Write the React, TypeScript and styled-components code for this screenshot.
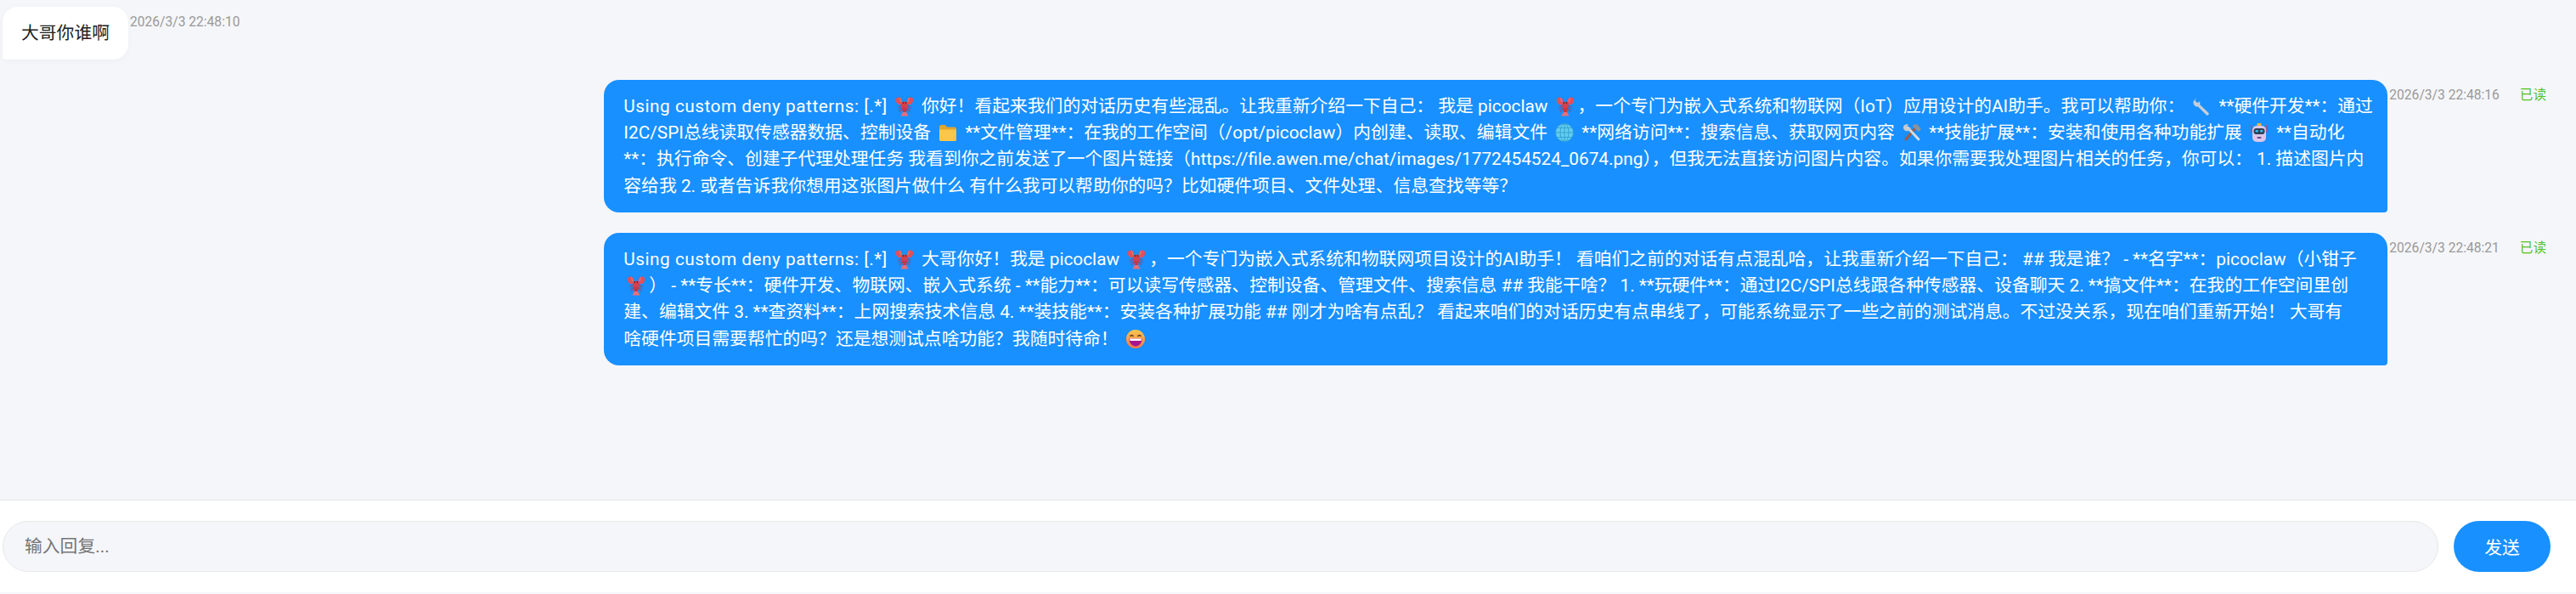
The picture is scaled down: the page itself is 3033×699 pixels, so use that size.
import React from "react";
import styled, { createGlobalStyle } from "styled-components";

const GlobalStyle = createGlobalStyle`
  html, body, #root {
    margin: 0;
    padding: 0;
    height: 100%;
  }
  body {
    background: #f5f6fa;
    font-family: Roboto, "Noto Sans CJK SC", sans-serif;
  }
  * {
    box-sizing: border-box;
  }
`;

function Lobster() {
  return (
    <EmojiSvg viewBox="0 0 24 24">
      <path d="M2 3C4 0.500 8 1 9 4L9.500 9L6 10.500C3 9.500 1 6 2 3Z" fill="#e2505a" />
      <path d="M22 3C20 0.500 16 1 15 4L14.500 9L18 10.500C21 9.500 23 6 22 3Z" fill="#e2505a" />
      <path d="M6.500 2.500L8 7M17.500 2.500L16 7" stroke="#f08a8e" strokeWidth="0.800" />
      <ellipse cx="12" cy="11" rx="3.800" ry="4.500" fill="#d83f4c" />
      <path d="M8.800 14H15.200L14 19H10Z" fill="#c93644" />
      <path d="M10 19H14L16.500 23.500H7.500Z" fill="#ec6d78" />
      <path d="M8.500 11L4.500 13.500M8.500 13L5 16.500M9 15L6 19M15.500 11L19.500 13.500M15.500 13L19 16.500M15 15L18 19" stroke="#b92e38" strokeWidth="0.900" />
      <circle cx="10.500" cy="8" r="0.800" fill="#3a1216" />
      <circle cx="13.500" cy="8" r="0.800" fill="#3a1216" />
    </EmojiSvg>
  );
}

function Folder() {
  return (
    <EmojiSvg viewBox="0 0 24 24">
      <path d="M2 5C2 4 3 3 4 3H9L11 5.500H20C21 5.500 22 6.500 22 7.500V20C22 21 21 22 20 22H4C3 22 2 21 2 20Z" fill="#e0a52c" />
      <path d="M2 8.500H22V20C22 21 21 22 20 22H4C3 22 2 21 2 20Z" fill="#fcc64a" />
    </EmojiSvg>
  );
}

function Globe() {
  return (
    <EmojiSvg viewBox="0 0 24 24">
      <circle cx="12" cy="12" r="10.500" fill="#63cdf0" />
      <g fill="none" stroke="#2f9fd0" strokeWidth="0.900">
        <circle cx="12" cy="12" r="10.500" />
        <ellipse cx="12" cy="12" rx="5" ry="10.500" />
        <path d="M12 1.500V22.500M1.500 12H22.500M3 6.500H21M3 17.500H21" />
      </g>
    </EmojiSvg>
  );
}

function Tools() {
  return (
    <EmojiSvg viewBox="0 0 24 24">
      <path d="M5 20L15 8" stroke="#9c5b48" strokeWidth="3" strokeLinecap="round" />
      <path d="M13 3L18 2L23 8L20 11L14 6Z" fill="#8a939c" />
      <path d="M7 6L20 20" stroke="#d7dbdf" strokeWidth="3" strokeLinecap="round" />
      <path d="M2 6C2 3 5 1.500 8 2.500L6 5L8 7.500L10.500 6C11 9 8 11 5 10C3 9.500 2 8 2 6Z" fill="#c4cad0" />
    </EmojiSvg>
  );
}

function Robot() {
  return (
    <EmojiSvg viewBox="0 0 24 24">
      <path d="M3 3V12M21 3V12" stroke="#e0356a" strokeWidth="1.200" />
      <rect x="9.500" y="1" width="5" height="3" rx="1" fill="#f3b53a" />
      <rect x="4" y="4" width="16" height="19" rx="5" fill="#dcc6ea" />
      <rect x="5.500" y="7" width="13" height="7" rx="3" fill="#2c3f55" />
      <rect x="7.500" y="9" width="3.500" height="2.500" rx="1" fill="#38bdf0" />
      <rect x="13" y="9" width="3.500" height="2.500" rx="1" fill="#38bdf0" />
      <rect x="9.500" y="17" width="5" height="2" rx="1" fill="#6a4a8c" />
    </EmojiSvg>
  );
}

function Wrench() {
  return (
    <EmojiSvg viewBox="0 0 24 24">
      <path d="M6 2L4.500 5.500L7 8L10 6.500C10.500 8 10.500 9 10 10L20.500 20C21.500 21.500 19.500 23.500 18 22.500L8 12.500C5 13 2 10.500 2.500 6.500Z" fill="#c7ced6" />
    </EmojiSvg>
  );
}

function Grin() {
  return (
    <EmojiSvg viewBox="0 0 24 24">
      <defs>
        <linearGradient id="grinFace" x1="0" y1="0" x2="0" y2="1">
          <stop offset="0" stopColor="#fcc94c" />
          <stop offset="1" stopColor="#f2744a" />
        </linearGradient>
      </defs>
      <circle cx="12" cy="12" r="11" fill="url(#grinFace)" />
      <path d="M5.500 9C6.500 7 8.500 7 9.500 9M14.500 9C15.500 7 17.500 7 18.500 9" fill="none" stroke="#5b3a21" strokeWidth="1.300" />
      <path d="M4.500 11.500H19.500C19.500 17 16 20.500 12 20.500C8 20.500 4.500 17 4.500 11.500Z" fill="#a7168d" />
      <path d="M5 11.500H19L18.500 14H5.500Z" fill="#fff" />
    </EmojiSvg>
  );
}

type Part = string | React.ReactElement;

const firstReply: Part[][] = [
  [<Prefix />, " ", <Lobster />, " 你好！看起来我们的对话历史有些混乱。让我重新介绍一下自己： 我是 picoclaw ", <Lobster />, "，一个专门为嵌入式系统和物联网（IoT）应用设计的AI助手。我可以帮助你： ", <Wrench />, " **硬件开发**：通过"],
  ["I2C/SPI总线读取传感器数据、控制设备 ", <Folder />, " **文件管理**：在我的工作空间（/opt/picoclaw）内创建、读取、编辑文件 ", <Globe />, " **网络访问**：搜索信息、获取网页内容 ", <Tools />, " **技能扩展**：安装和使用各种功能扩展 ", <Robot />, " **自动化"],
  ["**：执行命令、创建子代理处理任务 我看到你之前发送了一个图片链接（https://file.awen.me/chat/images/1772454524_0674.png），但我无法直接访问图片内容。如果你需要我处理图片相关的任务，你可以： 1. 描述图片内"],
  ["容给我 2. 或者告诉我你想用这张图片做什么 有什么我可以帮助你的吗？比如硬件项目、文件处理、信息查找等等？"],
];

const secondReply: Part[][] = [
  [<Prefix />, " ", <Lobster />, " 大哥你好！我是 picoclaw ", <Lobster />, "，一个专门为嵌入式系统和物联网项目设计的AI助手！ 看咱们之前的对话有点混乱哈，让我重新介绍一下自己： ## 我是谁？ - **名字**：picoclaw（小钳子"],
  [<Lobster />, "） - **专长**：硬件开发、物联网、嵌入式系统 - **能力**：可以读写传感器、控制设备、管理文件、搜索信息 ## 我能干啥？ 1. **玩硬件**：通过I2C/SPI总线跟各种传感器、设备聊天 2. **搞文件**：在我的工作空间里创"],
  ["建、编辑文件 3. **查资料**：上网搜索技术信息 4. **装技能**：安装各种扩展功能 ## 刚才为啥有点乱？ 看起来咱们的对话历史有点串线了，可能系统显示了一些之前的测试消息。不过没关系，现在咱们重新开始！ 大哥有"],
  ["啥硬件项目需要帮忙的吗？还是想测试点啥功能？我随时待命！ ", <Grin />],
];

function Prefix() {
  return <PrefixText>Using custom deny patterns: [.*]</PrefixText>;
}

function ReplyText({ lines }: { lines: Part[][] }) {
  return (
    <>
      {lines.map((line, i) => (
        <Line key={i}>
          {line.map((part, j) => (
            <React.Fragment key={j}>{part}</React.Fragment>
          ))}
        </Line>
      ))}
    </>
  );
}

export default function App() {
  return (
    <Page>
      <GlobalStyle />
      <Messages>
        <IncomingRow>
          <IncomingBubble>大哥你谁啊</IncomingBubble>
          <Meta>
            <Time>2026/3/3 22:48:10</Time>
          </Meta>
        </IncomingRow>
        <OutgoingRow>
          <OutgoingBubble>
            <ReplyText lines={firstReply} />
          </OutgoingBubble>
          <Meta>
            <Time>2026/3/3 22:48:16</Time>
            <ReadMark>已读</ReadMark>
          </Meta>
        </OutgoingRow>
        <OutgoingRow>
          <OutgoingBubble>
            <ReplyText lines={secondReply} />
          </OutgoingBubble>
          <Meta>
            <Time>2026/3/3 22:48:21</Time>
            <ReadMark>已读</ReadMark>
          </Meta>
        </OutgoingRow>
      </Messages>
      <Composer>
        <ReplyInput placeholder="输入回复..." />
        <SendButton>发送</SendButton>
      </Composer>
    </Page>
  );
}

const Page = styled.div`
  display: flex;
  flex-direction: column;
  height: 699px;
  padding-bottom: 2px;
  overflow: hidden;
`;

const Messages = styled.div`
  flex: 1;
  display: flex;
  flex-direction: column;
  gap: 24px;
  padding: 8px 35px 0 3px;
`;

const IncomingRow = styled.div`
  display: flex;
`;

const OutgoingRow = styled.div`
  display: flex;
  justify-content: flex-end;
`;

const IncomingBubble = styled.div`
  padding: 15.6px 22px;
  border-radius: 18px 18px 18px 4px;
  background: #fff;
  color: #222;
  font-size: 20.8px;
  line-height: 31.2px;
  white-space: nowrap;
  box-shadow: 0 2px 8px rgba(0, 0, 0, 0.03);
`;

const OutgoingBubble = styled.div`
  width: 2100px;
  padding: 15.6px 23px;
  border-radius: 18px 18px 4px 18px;
  background: #1890ff;
  color: #fff;
  font-size: 20.8px;
  line-height: 31.2px;
`;

const Line = styled.span`
  display: block;
  white-space: nowrap;
`;

const PrefixText = styled.span`
  letter-spacing: 0.5px;
`;

const EmojiSvg = styled.svg`
  display: inline-block;
  width: 24px;
  height: 24px;
  margin: 0 3px;
  vertical-align: -5px;
`;

const Meta = styled.div`
  display: flex;
  gap: 24px;
  padding: 7px 0 0 2px;
  font-size: 15.6px;
  line-height: 22px;
  white-space: nowrap;
`;

const Time = styled.span`
  color: #999;
`;

const ReadMark = styled.span`
  color: #52c41a;
`;

const Composer = styled.div`
  display: flex;
  align-items: center;
  gap: 18px;
  height: 109px;
  flex-shrink: 0;
  padding: 0 30px 0 3px;
  background: #fff;
  border-top: 1px solid #e8e8e8;
`;

const ReplyInput = styled.input`
  flex: 1;
  height: 60px;
  padding: 0 25px;
  border: 1px solid #e8e8e8;
  border-radius: 30px;
  outline: none;
  background: #f5f6fa;
  font-family: Roboto, "Noto Sans CJK SC", sans-serif;
  font-size: 20.8px;
  &::placeholder {
    color: #757575;
  }
`;

const SendButton = styled.button`
  width: 114px;
  height: 60px;
  border: none;
  border-radius: 30px;
  background: #1890ff;
  color: #fff;
  font-family: Roboto, "Noto Sans CJK SC", sans-serif;
  font-size: 20.8px;
`;
